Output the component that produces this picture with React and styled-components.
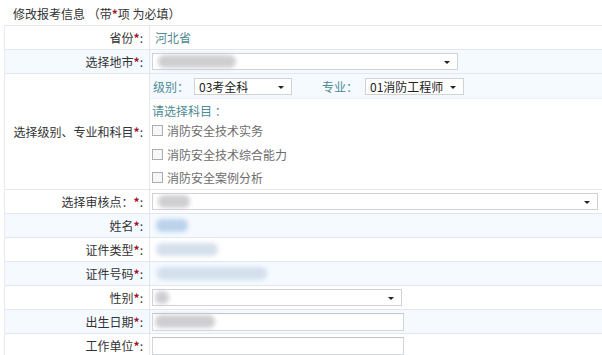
import React from 'react'
import styled, { createGlobalStyle } from 'styled-components'

const GlobalStyle = createGlobalStyle`
  body {
    margin: 0;
    background: #fff;
    font-family: "Noto Sans CJK SC", "Noto Sans", sans-serif;
    font-size: 12px;
    color: #333;
  }
`

const Page = styled.div`
  width: 602px;
  height: 355px;
  overflow: hidden;
`

const Title = styled.div`
  height: 25px;
  line-height: 28px;
  padding-left: 13px;
  font-size: 12px;
  color: #333;
`

const Star = styled.span`
  color: #a0142a;
  font-weight: bold;
`

const Table = styled.div`
  margin-left: 4px;
  border-left: 1px solid #e6e9ee;
  border-top: 1px solid #e3e6eb;
`

const Row = styled.div`
  display: grid;
  grid-template-columns: 145px 1fr;
  height: ${p => p.$h || 24}px;
  border-bottom: 1px solid #e3e6eb;
  box-sizing: border-box;
  background: ${p => (p.$alt ? '#f4faff' : '#fff')};
`

const Label = styled.div`
  display: flex;
  align-items: center;
  justify-content: flex-end;
  padding-right: 6px;
  border-right: 1px solid #e3e6eb;
  color: #333;
  white-space: nowrap;
`

const Cell = styled.div`
  display: flex;
  align-items: center;
  padding-left: 2px;
`

const Value = styled.span`
  color: #4f8a92;
  padding-left: 3px;
`

const Select = styled.div`
  position: relative;
  width: ${p => p.$w}px;
  height: 17px;
  box-sizing: border-box;
  border: 1px solid #cfd3d8;
  background: #fff;
  display: flex;
  align-items: center;
  padding-left: 4px;
  font-size: 12px;
  color: #222;

  &::after {
    content: '';
    position: absolute;
    right: 7px;
    top: 7px;
    border-left: 3px solid transparent;
    border-right: 3px solid transparent;
    border-top: 3px solid #222;
  }
`

const Input = styled.div`
  width: ${p => p.$w}px;
  height: 18px;
  box-sizing: border-box;
  border: 1px solid #d3d6db;
  border-top-color: #bfc3c8;
  background: #fff;
  display: flex;
  align-items: center;
  padding-left: 1px;
`

const Blur = styled.span`
  display: inline-block;
  width: ${p => p.$w}px;
  height: 13px;
  margin-left: ${p => p.$ml || 1}px;
  background: ${p => p.$c || '#cfcfd2'};
  border-radius: 6px;
  filter: blur(2px);
`

const Group = styled.div`
  display: flex;
  flex-direction: column;
`

const SubRow = styled.div`
  height: 24px;
  display: flex;
  align-items: center;
  background: #f4faff;
  border-bottom: 1px solid #edf1f5;
  padding-left: 2px;
`

const Teal = styled.span`
  color: #4f8a92;
  margin: ${p => p.$m || '0'};
`

const Subjects = styled.div`
  display: flex;
  flex-direction: column;
  padding-left: 2px;
  padding-top: 3px;
`

const Check = styled.label`
  display: flex;
  align-items: center;
  height: 23.5px;
  color: #6b6b6b;

  i {
    width: 9px;
    height: 9px;
    border: 1px solid #a9acb0;
    background: #f7f7f7;
    margin-right: 4px;
  }
`

const subjects = ['消防安全技术实务', '消防安全技术综合能力', '消防安全案例分析']

export default function App() {
  return (
    <Page>
      <GlobalStyle />
      <Title>修改报考信息 （带<Star>*</Star>项 为必填）</Title>
      <Table>
        <Row>
          <Label>省份<Star>*</Star>:</Label>
          <Cell><Value>河北省</Value></Cell>
        </Row>
        <Row $alt>
          <Label>选择地市<Star>*</Star>:</Label>
          <Cell>
            <Select $w={306}><Blur $w={78} /></Select>
          </Cell>
        </Row>
        <Row $h={116}>
          <Label>选择级别、专业和科目<Star>*</Star>:</Label>
          <Group>
            <SubRow>
              <Teal $m="0 5px 0 1px">级别：</Teal>
              <Select $w={98}>03考全科</Select>
              <Teal $m="0 7px 0 30px">专业：</Teal>
              <Select $w={99}>01消防工程师</Select>
            </SubRow>
            <Subjects>
              <Teal>请选择科目 ：</Teal>
              {subjects.map(s => (
                <Check key={s}><i />{s}</Check>
              ))}
            </Subjects>
          </Group>
        </Row>
        <Row>
          <Label>选择审核点：<Star>*</Star>:</Label>
          <Cell>
            <Select $w={446}><Blur $w={32} /></Select>
          </Cell>
        </Row>
        <Row $alt>
          <Label>姓名<Star>*</Star>:</Label>
          <Cell><Blur $w={32} $ml={4} $c="#bcd3ea" /></Cell>
        </Row>
        <Row>
          <Label>证件类型<Star>*</Star>:</Label>
          <Cell><Blur $w={62} $ml={4} $c="#d6e0ec" /></Cell>
        </Row>
        <Row $alt>
          <Label>证件号码<Star>*</Star>:</Label>
          <Cell><Blur $w={110} $ml={5} $c="#d5e0ee" /></Cell>
        </Row>
        <Row>
          <Label>性别<Star>*</Star>:</Label>
          <Cell>
            <Select $w={250}><Blur $w={14} $ml={-2} /></Select>
          </Cell>
        </Row>
        <Row $alt>
          <Label>出生日期<Star>*</Star>:</Label>
          <Cell>
            <Input $w={252}><Blur $w={60} /></Input>
          </Cell>
        </Row>
        <Row>
          <Label>工作单位<Star>*</Star>:</Label>
          <Cell>
            <Input $w={252} />
          </Cell>
        </Row>
      </Table>
    </Page>
  )
}
